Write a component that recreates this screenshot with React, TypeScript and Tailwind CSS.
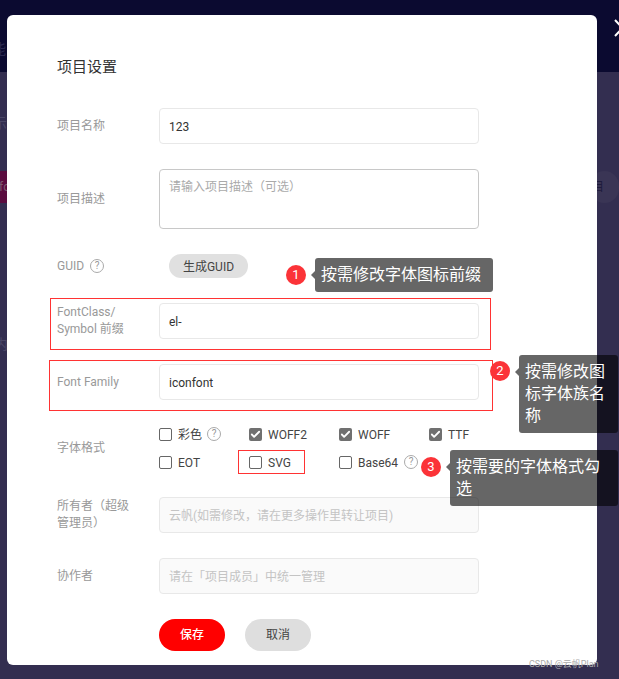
import type { ReactNode } from 'react';
import { Check } from 'lucide-react';

const font = "font-['Roboto','Noto_Sans_CJK_SC',sans-serif]";

function Help({ className = '' }: { className?: string }) {
  return (
    <span className={`inline-flex h-[14px] w-[14px] items-center justify-center rounded-full border border-[#aaa] text-[10px] leading-none text-[#999] ${className}`}>
      ?
    </span>
  );
}

function Box({ checked = false }: { checked?: boolean }) {
  return checked ? (
    <span className="flex h-[13px] w-[13px] items-center justify-center rounded-[2px] bg-[#707070]">
      <Check size={11} strokeWidth={4} className="text-white" />
    </span>
  ) : (
    <span className="h-[13px] w-[13px] rounded-[2px] border border-[#666] bg-white" />
  );
}

function Format({ label, checked, children, className = '' }: { label: string; checked?: boolean; children?: ReactNode; className?: string }) {
  return (
    <label className={`flex h-[14px] items-center text-[12px] leading-none text-[#444] ${className}`}>
      <Box checked={checked} />
      <span className="ml-[6px] pt-[1px]">{label}</span>
      {children}
    </label>
  );
}

function Row({ label, className, children }: { label: ReactNode; className: string; children: ReactNode }) {
  return (
    <div className={`flex items-center ${className}`}>
      <div className="w-[102px] pr-[8px] text-[12px] leading-[17px] text-[#999]">{label}</div>
      {children}
    </div>
  );
}

function TextInput({ value, disabled }: { value: string; disabled?: boolean }) {
  return (
    <div className={`flex h-[36px] w-[320px] items-center rounded-[4px] border border-[#e8e8e8] px-[9px] pt-[1px] text-[12px] ${disabled ? 'bg-[#fafafa] text-[#c4c4c4]' : 'bg-white text-[#333]'}`}>
      {value}
    </div>
  );
}

function Note({ num, className, bubble, children }: { num: string; className: string; bubble: string; children: ReactNode }) {
  return (
    <>
      <span className={`absolute flex h-[20px] w-[20px] items-center justify-center rounded-full bg-[#fb3338] text-[13px] text-white ${className}`}>
        {num}
      </span>
      <div className={`absolute rounded-[3px] bg-[rgba(0,0,0,0.6)] px-[6px] text-[16px] leading-[22px] text-white ${bubble}`}>
        <span className="absolute left-[-4px] top-[13px] h-0 w-0 border-y-[4px] border-r-[4px] border-y-transparent border-r-[rgba(0,0,0,0.6)]" />
        {children}
      </div>
    </>
  );
}

export default function App() {
  return (
    <div className={`relative h-[679px] w-[619px] overflow-hidden bg-[#332e50] ${font}`}>
      {/* page behind the overlay */}
      <div className="h-[72px] bg-[#0b0a30]" />
      <span className="absolute left-[-8px] top-[39px] text-[14px] text-[#2c2a50]">能</span>
      <span className="absolute left-[-7px] top-[113px] text-[14px] text-[#4a4666]">示</span>
      <span className="absolute left-[-6px] top-[334px] text-[14px] text-[#4a4666]">内</span>
      <div className="absolute left-[-20px] top-[171px] flex h-[32px] w-[30px] items-center justify-end bg-[#5a0c3f] text-[12px] text-[#7a5a70]">fo</div>
      <div className="absolute left-[590px] top-[171px] flex h-[32px] w-[29px] items-center justify-end rounded-full bg-[#3a3555] pr-[15px] text-[12px] text-[#1e1b3c]">目</div>
      <svg className="absolute left-[614px] top-[19px] h-[18px] w-[10px]" viewBox="0 0 10 18" fill="none" stroke="white" strokeWidth="2">
        <path d="M1 1 L 16 17 M1 17 L 16 1" />
      </svg>

      {/* dialog */}
      <div className="absolute left-[7px] top-[15px] h-[650px] w-[590px] rounded-[6px] bg-white pl-[50px] pt-[41px]">
        <h2 className="h-[20px] text-[15px] font-normal leading-[22px] text-[#333]">项目设置</h2>
        <Row label="项目名称" className="mt-[32px]">
          <TextInput value="123" />
        </Row>
        <Row label="项目描述" className="mt-[25px]">
          <div className="h-[60px] w-[320px] rounded-[4px] border border-[#c8c8c8] px-[9px] py-[8px] text-[12px] leading-[18px] text-[#aaa]">
            请输入项目描述（可选）
          </div>
        </Row>
        <Row label={<span className="flex items-center gap-[6px]">GUID <Help /></span>} className="mt-[25px] h-[24px]">
          <button className="ml-[10px] h-[24px] w-[79px] rounded-full bg-[#e0e0e0] pt-[1px] text-[12px] text-[#444]">生成GUID</button>
        </Row>
        <Row label={<>FontClass/<br />Symbol 前缀</>} className="mt-[25px]">
          <TextInput value="el-" />
        </Row>
        <Row label="Font Family" className="mt-[25px]">
          <TextInput value="iconfont" />
        </Row>
        <Row label="字体格式" className="mt-[27px]">
          <div className="grid grid-cols-[90px_90px_90px_auto] gap-y-[14px]">
            <Format label="彩色"><Help className="ml-[5px]" /></Format>
            <Format label="WOFF2" checked />
            <Format label="WOFF" checked />
            <Format label="TTF" checked />
            <Format label="EOT" />
            <Format label="SVG" />
            <Format label="Base64"><Help className="ml-[6px]" /></Format>
          </div>
        </Row>
        <Row label={<>所有者（超级<br />管理员）</>} className="mt-[28px]">
          <TextInput value="云帆(如需修改，请在更多操作里转让项目)" disabled />
        </Row>
        <Row label="协作者" className="mt-[25px]">
          <TextInput value="请在「项目成员」中统一管理" disabled />
        </Row>
        <div className="ml-[102px] mt-[25px] flex gap-[20px]">
          <button className="h-[32px] w-[66px] rounded-full bg-[#ff0000] text-[12px] font-medium text-white">保存</button>
          <button className="h-[32px] w-[66px] rounded-full bg-[#dedede] text-[12px] text-[#444]">取消</button>
        </div>
      </div>

      {/* red annotation frames */}
      <div className="absolute left-[50px] top-[298px] h-[52px] w-[441px] border border-[#f33]" />
      <div className="absolute left-[49px] top-[360px] h-[51px] w-[444px] border border-[#f33]" />
      <div className="absolute left-[238px] top-[450px] h-[24px] w-[67px] border border-[#f33]" />

      <Note num="1" className="left-[286px] top-[265px]" bubble="left-[315px] top-[258px] h-[34px] w-[178px] py-[6px]">
        按需修改字体图标前缀
      </Note>
      <Note num="2" className="left-[490px] top-[361px]" bubble="left-[519px] top-[355px] h-[78px] w-[99px] py-[6px]">
        按需修改图标字体族名称
      </Note>
      <Note num="3" className="left-[421px] top-[457px]" bubble="left-[450px] top-[450px] h-[56px] w-[168px] py-[6px]">
        按需要的字体格式勾选
      </Note>

      <span className="absolute left-[529px] top-[657px] text-[9px] leading-[14px] text-[#aaa]">CSDN @云帆Plan</span>
    </div>
  );
}
